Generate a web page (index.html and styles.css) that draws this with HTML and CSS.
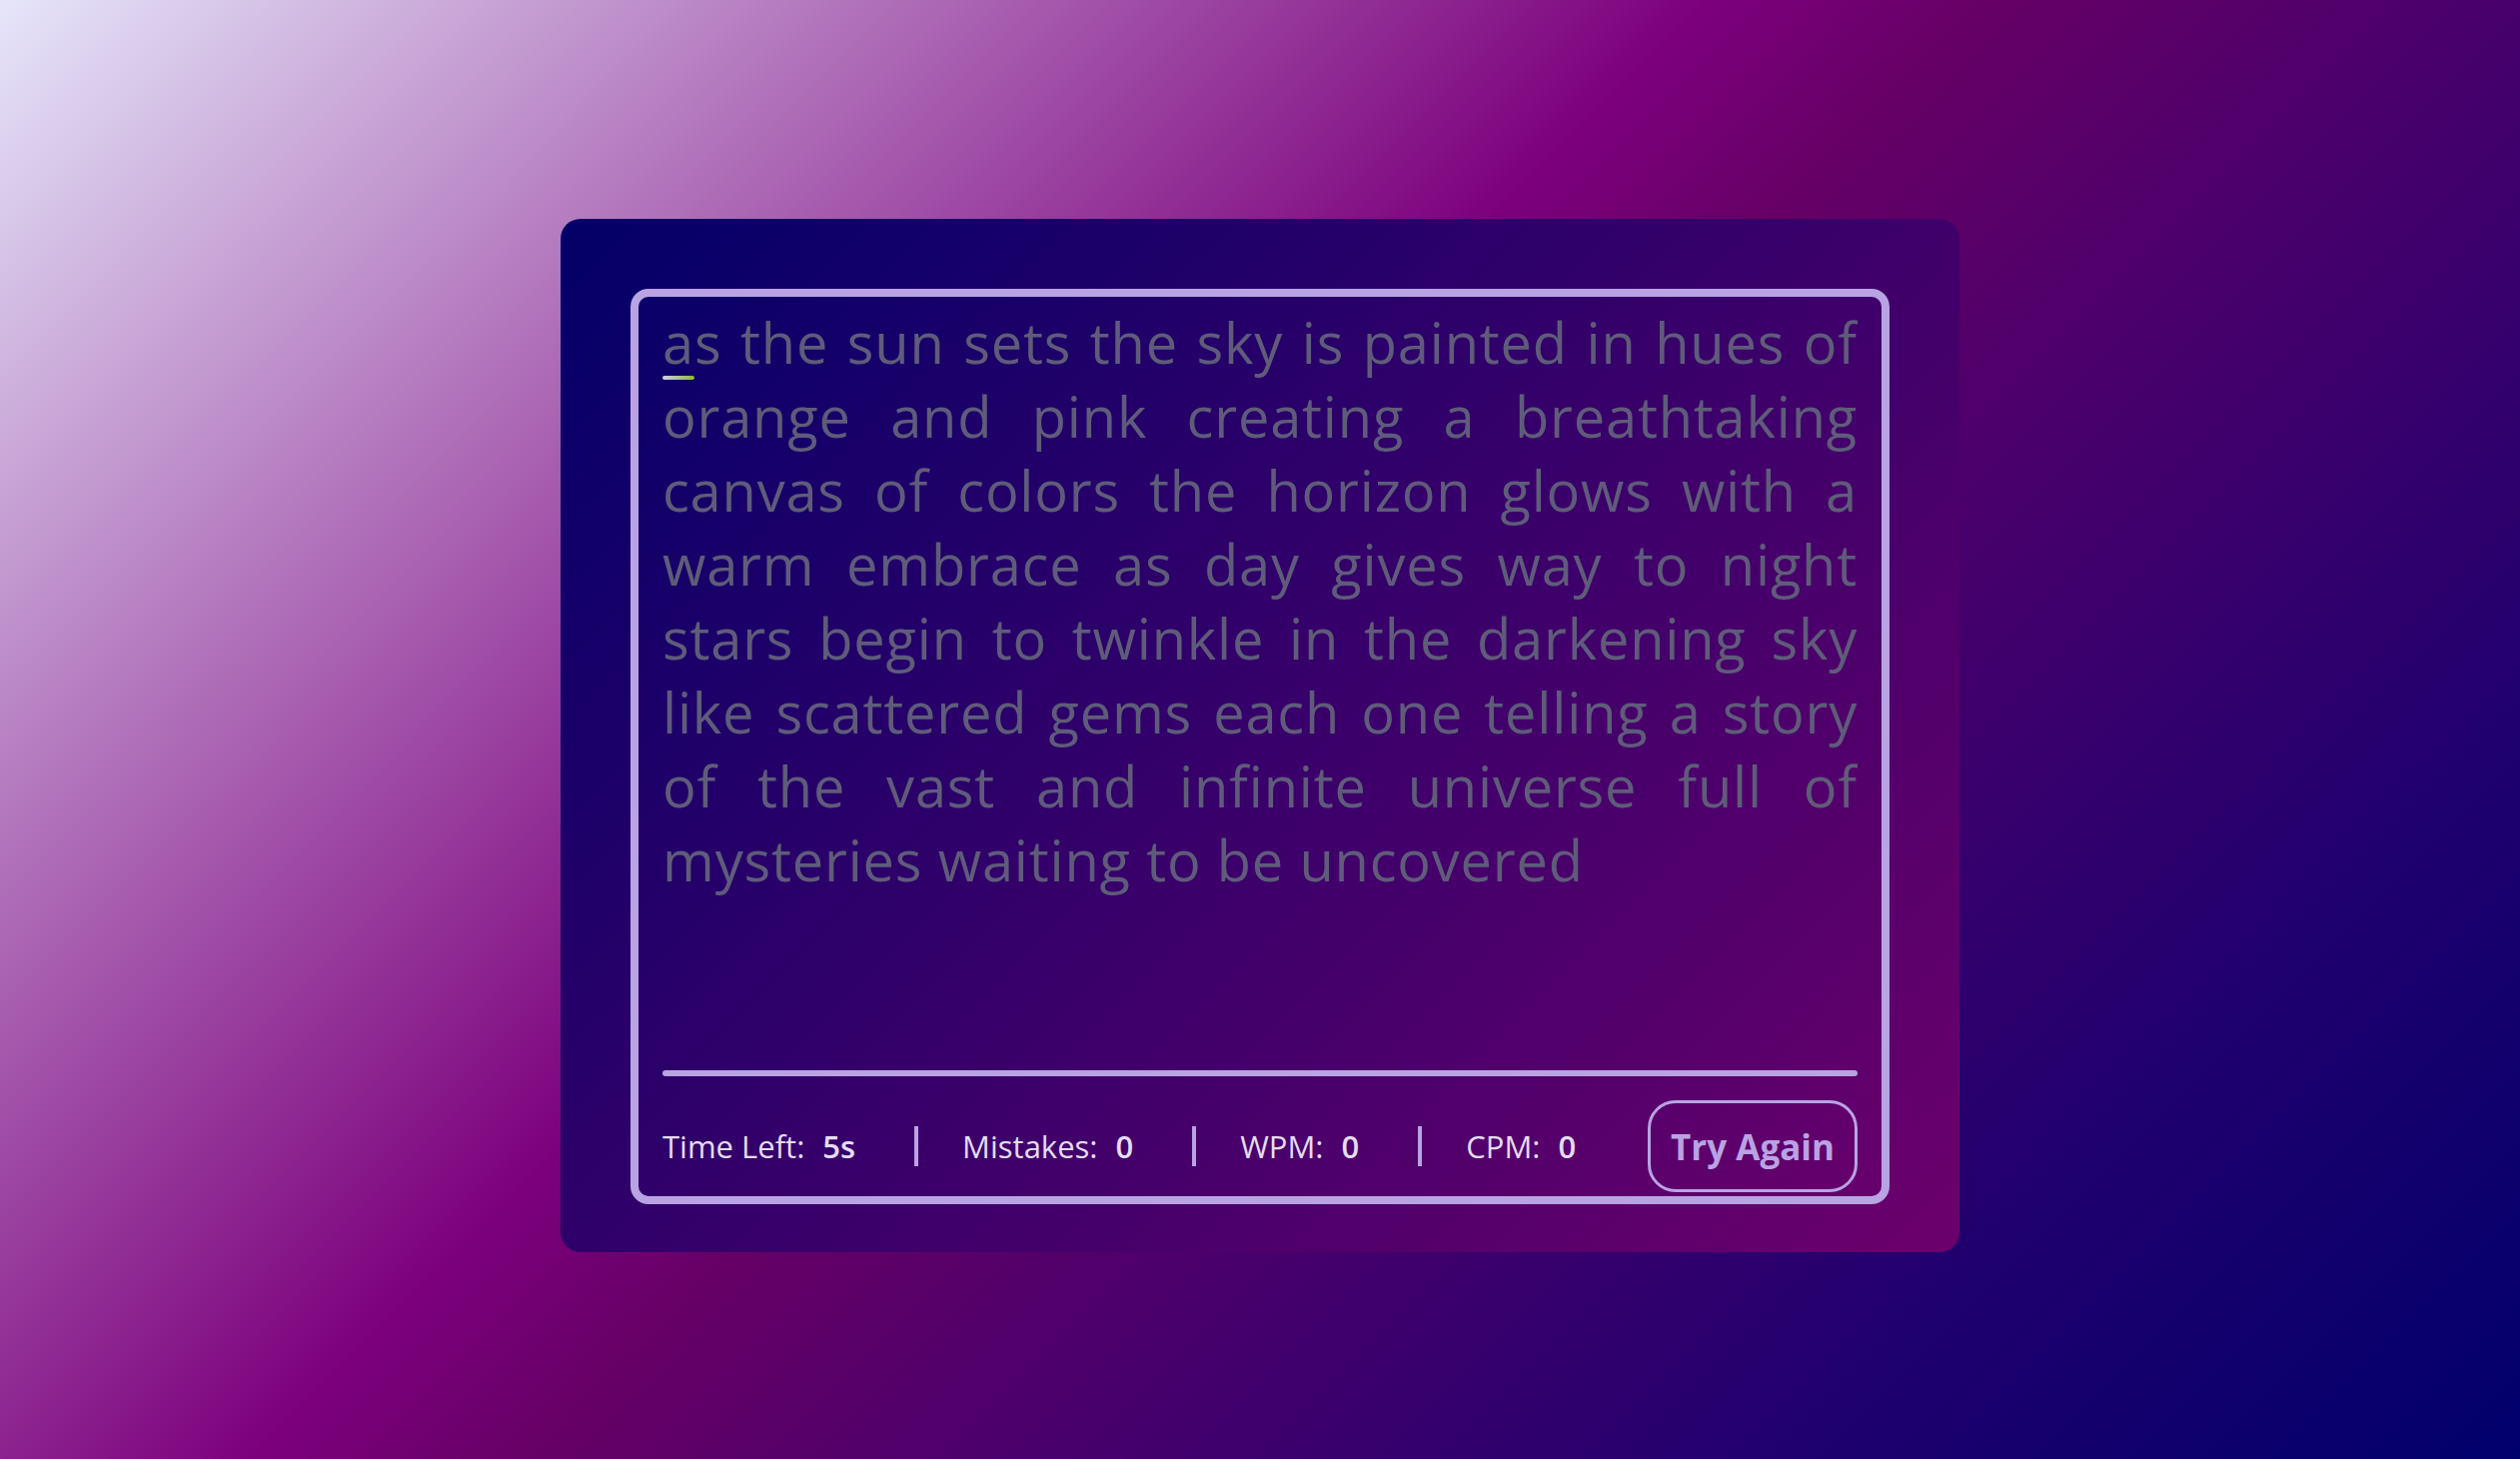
FILE: index.html
```html
<!DOCTYPE html>
<html lang="en">
<head>
<meta charset="utf-8">
<title>Typing Speed Test</title>
<link rel="stylesheet" href="styles.css">
</head>
<body>
  <div class="wrapper">
    <div class="test-box">
      <div class="typing-text">
        <p><span class="active">a</span>s the sun sets the sky is painted in hues of orange and pink creating a breathtaking canvas of colors the horizon glows with a warm embrace as day gives way to night stars begin to twinkle in the darkening sky like scattered gems each one telling a story of the vast and infinite universe full of mysteries waiting to be uncovered</p>
      </div>
      <div class="divider"></div>
      <div class="content">
        <ul class="result-details">
          <li class="time"><p>Time Left:</p><span>5s</span></li>
          <li class="mistake"><p>Mistakes:</p><span>0</span></li>
          <li class="wpm"><p>WPM:</p><span>0</span></li>
          <li class="cpm"><p>CPM:</p><span>0</span></li>
        </ul>
        <button class="try-again">Try Again</button>
      </div>
    </div>
  </div>
</body>
</html>
```

FILE: styles.css
```css
* {
  box-sizing: border-box;
  margin: 0;
  padding: 0;
}

body {
  min-height: 100vh;
  display: flex;
  align-items: center;
  justify-content: center;
  padding-top: 12px;
  font-family: "Open Sans", "Noto Sans", sans-serif;
  background: linear-gradient(135deg,
    #e6e6fa 0%,
    #7c007c 43%,
    #660066 50%,
    #4a006c 62%,
    #1e006e 82%,
    #00006c 100%);
}

.wrapper {
  width: 1400px;
  padding: 70px 70px 48px;
  border-radius: 20px;
  background: linear-gradient(135deg, #020068 0%, #6c006c 100%);
}

.test-box {
  border: 8px solid #b9a3e3;
  border-radius: 18px;
  padding: 8px 24px 4px;
}

.typing-text {
  height: 766px;
  overflow: hidden;
}

.typing-text p {
  font-size: 56px;
  line-height: 74px;
  letter-spacing: 0.8px;
  text-align: justify;
  color: #5f5c7a;
}

.typing-text .active {
  position: relative;
}

.typing-text .active::after {
  content: "";
  position: absolute;
  left: 0;
  right: 0;
  bottom: 0;
  height: 4px;
  border-radius: 2px;
  background: linear-gradient(90deg, #d2cbee 0%, #8dbb2e 100%);
}

.divider {
  height: 6px;
  border-radius: 3px;
  background: #b9a3e3;
}

.content {
  display: flex;
  align-items: center;
  justify-content: space-between;
  padding-top: 24px;
  height: 116px;
}

.result-details {
  display: flex;
  list-style: none;
}

.result-details li {
  display: flex;
  align-items: center;
  height: 40px;
  padding: 0 59px 0 44px;
  border-right: 4px solid #b9a3e3;
  font-size: 31px;
  color: #e4ddf8;
}

.result-details li:first-child {
  padding-left: 0;
}

.result-details li:last-child {
  border-right: none;
  padding-right: 0;
}

.result-details li span {
  margin-left: 18px;
  font-weight: 600;
}

.try-again {
  height: 92px;
  padding: 0 20px;
  border: 3px solid #b9a3e3;
  border-radius: 28px;
  background: transparent;
  color: #b9a3e3;
  font-family: "Open Sans", "Noto Sans", sans-serif;
  font-size: 35px;
  font-weight: 700;
  cursor: pointer;
}
```
